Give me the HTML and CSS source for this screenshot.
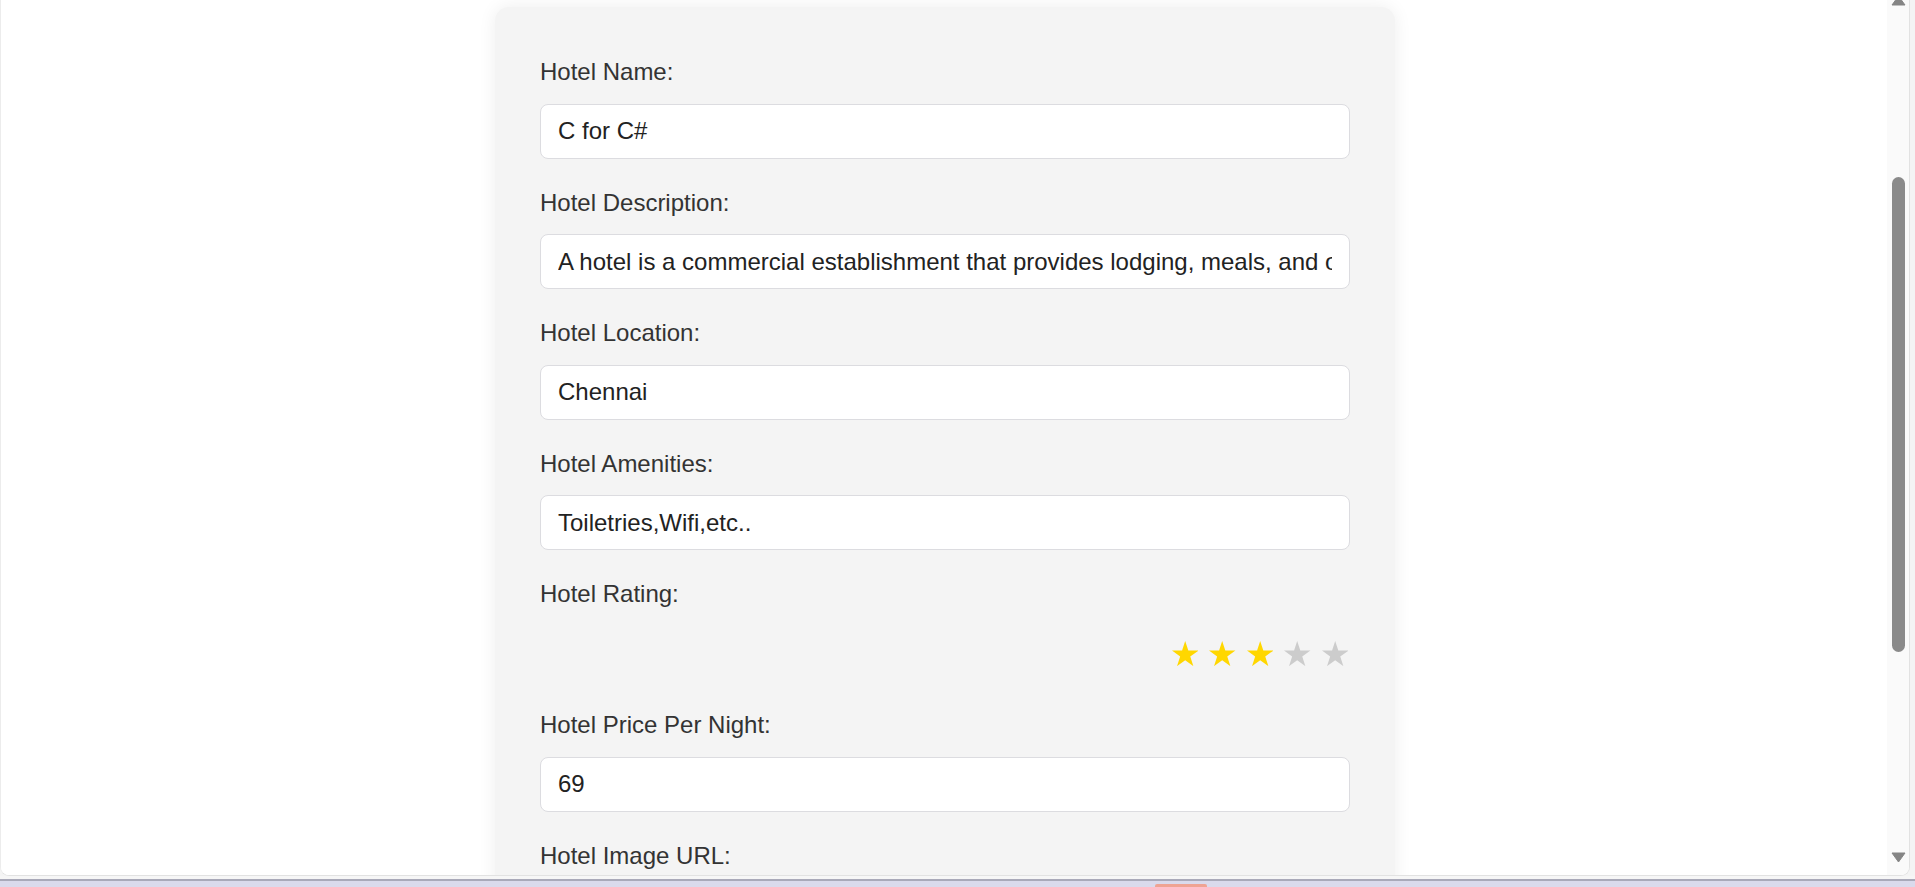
FILE: index.html
```html
<!DOCTYPE html>
<html lang="en">
<head>
<meta charset="utf-8">
<title>Edit Hotel</title>
<link rel="stylesheet" href="styles.css">
</head>
<body>
<div class="screen">
  <div class="window">
    <main class="viewport">
      <form class="card">
        <label class="field-label" for="name">Hotel Name:</label>
        <input class="field-input" id="name" type="text" value="C for C#">

        <label class="field-label" for="desc">Hotel Description:</label>
        <input class="field-input" id="desc" type="text" value="A hotel is a commercial establishment that provides lodging, meals, and other guest services.">

        <label class="field-label" for="loc">Hotel Location:</label>
        <input class="field-input" id="loc" type="text" value="Chennai">

        <label class="field-label" for="amen">Hotel Amenities:</label>
        <input class="field-input" id="amen" type="text" value="Toiletries,Wifi,etc..">

        <label class="field-label">Hotel Rating:</label>
        <div class="rating">
          <svg class="star on" viewBox="0 0 26.4 25.2"><polygon points="13.2,0 16.32,9.6 26.42,9.6 18.25,15.54 21.37,25.15 13.2,19.21 5.03,25.15 8.15,15.54 -0.02,9.6 10.08,9.6"/></svg>
          <svg class="star on" viewBox="0 0 26.4 25.2"><polygon points="13.2,0 16.32,9.6 26.42,9.6 18.25,15.54 21.37,25.15 13.2,19.21 5.03,25.15 8.15,15.54 -0.02,9.6 10.08,9.6"/></svg>
          <svg class="star on" viewBox="0 0 26.4 25.2"><polygon points="13.2,0 16.32,9.6 26.42,9.6 18.25,15.54 21.37,25.15 13.2,19.21 5.03,25.15 8.15,15.54 -0.02,9.6 10.08,9.6"/></svg>
          <svg class="star" viewBox="0 0 26.4 25.2"><polygon points="13.2,0 16.32,9.6 26.42,9.6 18.25,15.54 21.37,25.15 13.2,19.21 5.03,25.15 8.15,15.54 -0.02,9.6 10.08,9.6"/></svg>
          <svg class="star" viewBox="0 0 26.4 25.2"><polygon points="13.2,0 16.32,9.6 26.42,9.6 18.25,15.54 21.37,25.15 13.2,19.21 5.03,25.15 8.15,15.54 -0.02,9.6 10.08,9.6"/></svg>
        </div>

        <label class="field-label" for="price">Hotel Price Per Night:</label>
        <input class="field-input" id="price" type="text" value="69">

        <label class="field-label" for="img">Hotel Image URL:</label>
        <input class="field-input" id="img" type="text" value="https://example.com/hotel.jpg">
      </form>
    </main>
    <div class="scrollbar">
      <svg class="arrow arrow-up" viewBox="0 0 15 11"><polygon points="7.5,1 14,10 1,10"/></svg>
      <div class="thumb"></div>
      <div class="track-fill"></div>
      <svg class="arrow arrow-down" viewBox="0 0 15 11"><polygon points="1,1 14,1 7.5,10"/></svg>
    </div>
  </div>
  <div class="desk-gap"></div>
  <div class="taskbar"><span class="task-item"></span></div>
</div>
</body>
</html>
```

FILE: styles.css
```css
* { box-sizing: border-box; }

html, body {
  margin: 0;
  padding: 0;
  height: 887px;
  overflow: hidden;
  background: #f4f4f4;
  font-family: "Liberation Sans", Arial, sans-serif;
}

.screen {
  display: flex;
  flex-direction: column;
  width: 1915px;
  height: 887px;
}

.window {
  display: flex;
  width: 1910px;
  height: 876px;
  background: #ffffff;
  border-right: 1px solid #e2e2e2;
  border-bottom: 1px solid #e2e2e2;
  border-left: 1px solid #ececec;
  border-radius: 0 0 9px 9px;
  overflow: hidden;
  flex-shrink: 0;
}

.viewport {
  flex: 1;
  overflow: hidden;
  padding: 7px 0 0 2px;
  background: #ffffff;
}

.card {
  display: block;
  width: 900px;
  margin: 0 auto;
  padding: 51px 45px 60px;
  background: #f4f4f4;
  border-radius: 14px;
  box-shadow: 0 0 18px rgba(0, 0, 0, 0.07);
}

.field-label {
  display: block;
  font-size: 24px;
  line-height: 27.6px;
  color: #333333;
  margin-bottom: 18px;
}

.field-input {
  display: block;
  width: 100%;
  height: 55px;
  margin: 0 0 30px;
  padding: 0 17px;
  font-family: "Liberation Sans", Arial, sans-serif;
  font-size: 24px;
  color: #222222;
  background: #ffffff;
  border: 1px solid #dcdce0;
  border-radius: 8px;
  outline: none;
}

.rating {
  display: flex;
  justify-content: flex-end;
  align-items: center;
  gap: 11px;
  height: 55px;
  margin-bottom: 30px;
  padding-right: 2px;
}

.star {
  width: 26.4px;
  height: 25.2px;
  fill: #cccccc;
}

.star.on {
  fill: #ffd700;
}

.scrollbar {
  display: flex;
  flex-direction: column;
  align-items: center;
  width: 22px;
  flex-shrink: 0;
  background: #fafafa;
}

.arrow {
  width: 15px;
  height: 11px;
  fill: #858585;
  stroke: #858585;
  stroke-width: 1;
  stroke-linejoin: round;
  flex-shrink: 0;
}

.arrow-up {
  margin-top: -5px;
}

.thumb {
  width: 13px;
  height: 475px;
  margin-top: 171px;
  background: #8a8a8a;
  border-radius: 7px;
  flex-shrink: 0;
}

.track-fill {
  flex: 1;
}

.arrow-down {
  margin-bottom: 12px;
}

.desk-gap {
  height: 3px;
  background: #f6f6f6;
  flex-shrink: 0;
}

.taskbar {
  flex: 1;
  display: flex;
  align-items: flex-end;
  padding-left: 1155px;
  background: #dadaec;
  border-top: 2px solid #a9a9b9;
}

.task-item {
  width: 52px;
  height: 3px;
  background: #efa393;
  border-radius: 2px 2px 0 0;
}
```
